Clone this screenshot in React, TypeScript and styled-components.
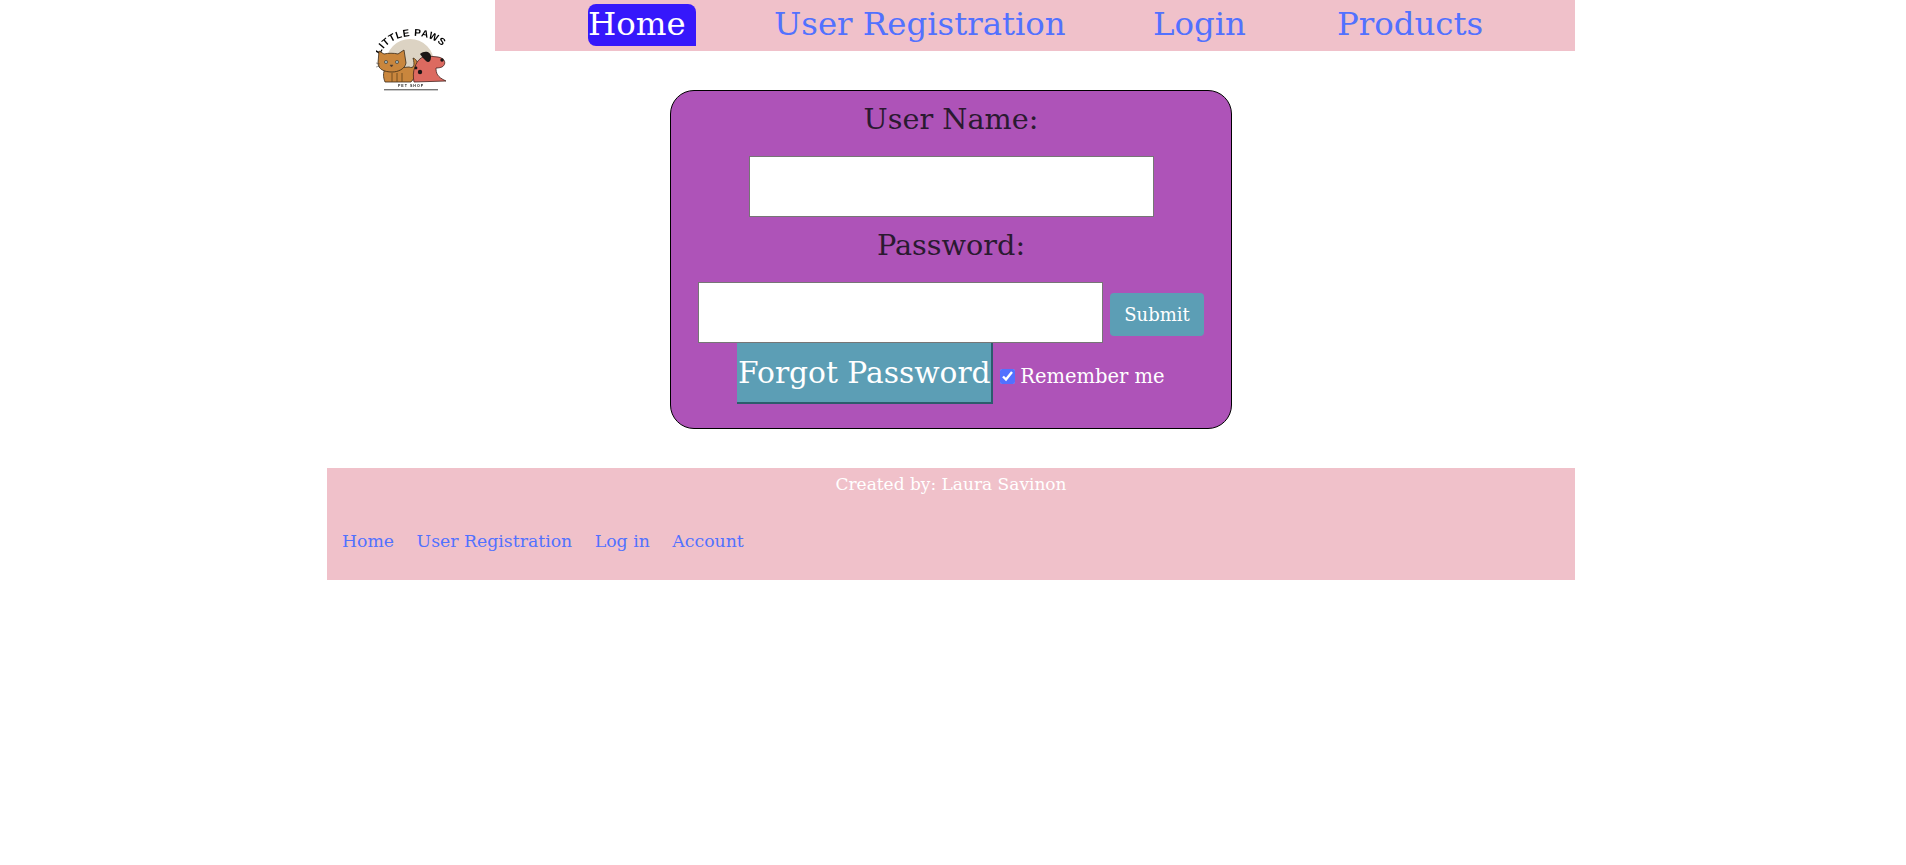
import React from "react";
import styled, { createGlobalStyle } from "styled-components";

const GlobalStyle = createGlobalStyle`
    html, body {
        margin: 0;
        padding: 0;
        background: #ffffff;
    }
    body {
        font-family: "DejaVu Serif", "Liberation Serif", serif;
    }
`;

const Page = styled.div`
    width: 1248px;
    margin-left: 327px;
`;

const Header = styled.header`
    display: flex;
    align-items: flex-start;
`;

const LogoCell = styled.div`
    width: 168px;
    height: 92px;
    flex: none;
    padding: 25px 0 0 49px;
    box-sizing: border-box;
`;

const Nav = styled.nav`
    flex: 1;
    height: 51px;
    background: #f0c1ca;
    display: flex;
    align-items: flex-start;
    gap: 78px;
    padding: 4px 0 0 93px;
    box-sizing: border-box;
`;

const NavLink = styled.a<{ $active?: boolean; $width: number }>`
    display: block;
    width: ${(p) => p.$width}px;
    height: 42px;
    line-height: 40px;
    font-size: 32.4px;
    white-space: nowrap;
    color: ${(p) => (p.$active ? "#ffffff" : "#5271ff")};
    background: ${(p) => (p.$active ? "#3618fb" : "transparent")};
    border-radius: 8px 8px 0 8px;
`;

const Card = styled.form`
    width: 562px;
    height: 339px;
    box-sizing: border-box;
    margin: -2px 0 0 343px;
    border: 1px solid #000000;
    border-radius: 24px;
    background: #ae53b8;
    display: flex;
    flex-direction: column;
    align-items: center;
    padding-top: 10px;
`;

const FieldLabel = styled.label<{ $gap: number }>`
    font-size: 28.7px;
    line-height: 36px;
    color: #2a1a30;
    margin-bottom: ${(p) => p.$gap}px;
`;

const TextField = styled.input`
    width: 405px;
    height: 61px;
    box-sizing: border-box;
    margin: 0;
    padding: 0;
    flex: none;
    background: #ffffff;
    border: 1px solid #767676;
    border-radius: 0;
`;

const SpacedField = styled(TextField)`
    margin-bottom: 10px;
`;

const PasswordRow = styled.div`
    display: flex;
    align-items: flex-start;
    gap: 7px;
`;

const SubmitButton = styled.button`
    width: 94px;
    height: 43px;
    margin-top: 11px;
    padding: 0;
    border: none;
    border-radius: 4px;
    background: #5c9eb5;
    color: #ffffff;
    font-family: inherit;
    font-size: 18px;
`;

const ForgotRow = styled.div`
    display: flex;
    align-items: center;
`;

const ForgotButton = styled.button`
    width: 256px;
    height: 61px;
    flex: none;
    padding: 0;
    box-sizing: border-box;
    border: none;
    border-right: 2px solid #2c5c6c;
    border-bottom: 2px solid #2c5c6c;
    background: #5c9eb5;
    color: #ffffff;
    font-family: inherit;
    font-size: 29.7px;
    white-space: nowrap;
`;

const RememberLabel = styled.label`
    display: flex;
    align-items: center;
    margin: 6px 0 0 7px;
    font-size: 19.5px;
    color: #ffffff;
    white-space: nowrap;
`;

const RememberBox = styled.input`
    width: 15px;
    height: 15px;
    margin: 0 5px 0 0;
    accent-color: #5271ff;
`;

const Footer = styled.footer`
    height: 112px;
    margin-top: 39px;
    background: #f0c1ca;
    box-sizing: border-box;
    padding-top: 5px;
`;

const Credit = styled.div`
    text-align: center;
    font-size: 17px;
    line-height: 22px;
    color: #ffffff;
`;

const FooterLinks = styled.div`
    display: flex;
    gap: 22.5px;
    margin-top: 35px;
    padding-left: 15px;
`;

const FooterLink = styled.a`
    font-size: 17.3px;
    line-height: 22px;
    color: #5271ff;
`;

const Logo = () => (
    <svg width="72" height="67" viewBox="0 0 72 67">
        <defs>
            <path id="logoArc" d="M4 30 C14 6 56 4 71 27" fill="none" />
            <filter id="logoSoft">
                <feGaussianBlur stdDeviation="0.3" />
            </filter>
        </defs>
        <g filter="url(#logoSoft)">
            <circle cx="34" cy="38" r="24" fill="#dcd3c3" />
            <rect x="0" y="56" width="72" height="11" fill="#ffffff" />
            <text fontFamily="'Liberation Sans', sans-serif" fontSize="10" fontWeight="700" fill="#000000" textLength="72">
                <textPath href="#logoArc">LITTLE PAWS</textPath>
            </text>
            <path d="M33 42 C38 44 39 40 37 33 C41 34 43 40 42 45 C41 50 38 53 35 57 L9 57 C7 52 7 48 9 44 Z" fill="#c9863c" stroke="#3a2a18" strokeWidth="0.8" />
            <path d="M3 26 L8 29 C12 28 18 28 22 29 L28 25 L30 38 C29 44 22 47 16 47 C8 47 2 44 2 38 Z" fill="#c9863c" stroke="#3a2a18" strokeWidth="0.8" />
            <circle cx="10" cy="37" r="1.6" fill="#9fb4bb" stroke="#222222" strokeWidth="0.5" />
            <circle cx="21" cy="37" r="1.6" fill="#9fb4bb" stroke="#222222" strokeWidth="0.5" />
            <path d="M14 40 L17 40 L15.5 42 Z M0 38 L4 39 M0 42 L4 41" stroke="#444444" strokeWidth="0.5" fill="#553322" />
            <path d="M16 48 V57 M21 48 V57 M26 48 V57" stroke="#5f431c" strokeWidth="0.8" />
            <path d="M39 42 C41 35 46 31 52 31 L62 32 C69 33 71 39 66 42 C63 43 61 43 60 43 C60 48 61 52 70 56 L38 57 C37 52 37 46 39 42 Z" fill="#dc6a61" stroke="#43211d" strokeWidth="0.8" />
            <path d="M44 29 C49 25 55 27 55 32 C55 37 52 38 50 36 C48 34 46 32 44 29 Z" fill="#1c1414" />
            <circle cx="44" cy="47" r="2.2" fill="#1c1414" />
            <circle cx="40" cy="43" r="1.4" fill="#1c1414" />
            <circle cx="66" cy="35" r="1.7" fill="#1c1414" />
            <text x="35" y="62" textAnchor="middle" fontFamily="'Liberation Sans', sans-serif" fontSize="3.6" fontWeight="700" fill="#222222" letterSpacing="1">PET SHOP</text>
            <rect x="8" y="64" width="54" height="1.4" fill="#777777" />
        </g>
    </svg>
);

const navItems = [
    { label: "Home", width: 108 },
    { label: "User Registration", width: 301 },
    { label: "Login", width: 106 },
    { label: "Products", width: 150 },
];
const footerItems = ["Home", "User Registration", "Log in", "Account"];

export default function App() {
    return (
        <Page>
            <GlobalStyle />
            <Header>
                <LogoCell>
                    <Logo />
                </LogoCell>
                <Nav>
                    {navItems.map((item, i) => (
                        <NavLink key={item.label} $active={i === 0} $width={item.width}>{item.label}</NavLink>
                    ))}
                </Nav>
            </Header>
            <Card>
                <FieldLabel $gap={19}>User Name:</FieldLabel>
                <SpacedField type="text" />
                <FieldLabel $gap={19}>Password:</FieldLabel>
                <PasswordRow>
                    <TextField type="password" />
                    <SubmitButton type="button">Submit</SubmitButton>
                </PasswordRow>
                <ForgotRow>
                    <ForgotButton type="button">Forgot Password</ForgotButton>
                    <RememberLabel>
                        <RememberBox type="checkbox" defaultChecked />
                        Remember me
                    </RememberLabel>
                </ForgotRow>
            </Card>
            <Footer>
                <Credit>Created by: Laura Savinon</Credit>
                <FooterLinks>
                    {footerItems.map((item) => (
                        <FooterLink key={item}>{item}</FooterLink>
                    ))}
                </FooterLinks>
            </Footer>
        </Page>
    );
}
